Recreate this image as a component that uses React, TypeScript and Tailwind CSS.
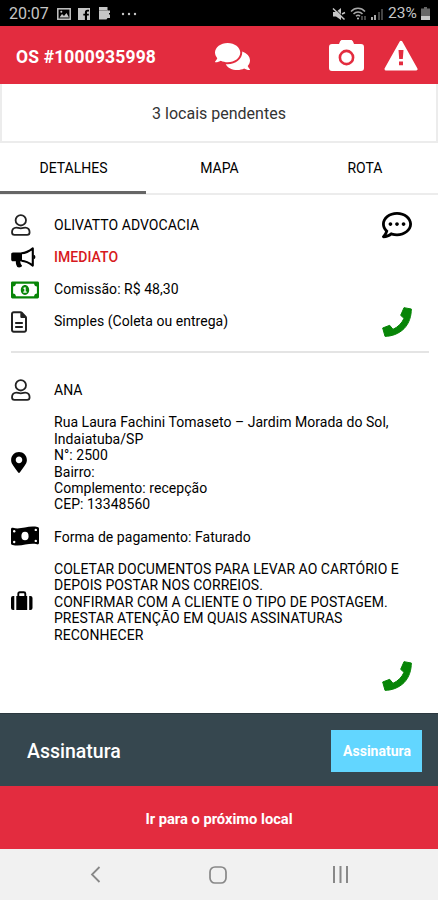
import type { ReactNode } from "react";
import { FaComments, FaMapMarkerAlt, FaRegCommentDots, FaRegMoneyBillAlt } from "react-icons/fa";
import { FaRegFileLines } from "react-icons/fa6";

function PersonIcon() {
  return (
    <svg width="20" height="22" viewBox="0 0 20 22" fill="none" stroke="#222" strokeWidth="1.8">
      <circle cx="9.8" cy="6.300" r="5.200" />
      <path d="M5.300 13.600C2.600 13.600 1 15.600 1 18.300c0 1.700.8 2.600 2.400 2.600h12.800c1.600 0 2.400-.9 2.400-2.600 0-2.700-1.600-4.700-4.300-4.700-1.500 0-2.500.7-4.500.7s-3-.7-4.500-.7Z" />
    </svg>
  );
}

function PhoneIcon({ className }: { className: string }) {
  return (
    <svg className={className} width="30" height="30" viewBox="0 0 90 90" fill="#078507" stroke="#078507" strokeWidth="3" strokeLinejoin="round">
      <path d="M66 2 88 6c0 20-6 43-22 59C50 81 28 88 9 88L2 63l21-8 10 12c15-7 27-19 33-33L56 25Z" />
    </svg>
  );
}

function CameraIcon() {
  return (
    <svg className="ml-[79px]" width="35" height="31" viewBox="0 0 35 31">
      <path fill="#fff" d="M3 4h7l1-2.400C11.400.6 12.200 0 13.200 0h8.600c1 0 1.800.6 2.200 1.600L25 4h7a3 3 0 0 1 3 3v21a3 3 0 0 1-3 3H3a3 3 0 0 1-3-3V7a3 3 0 0 1 3-3Z" />
      <circle cx="17.500" cy="17.500" r="6.600" fill="none" stroke="#e32c3f" strokeWidth="2.600" />
    </svg>
  );
}

function WarningIcon() {
  return (
    <svg className="ml-[20px]" width="34" height="31" viewBox="0 0 34 31">
      <path d="M17 2.200 32 29H2Z" fill="#fff" stroke="#fff" strokeWidth="3" strokeLinejoin="round" />
      <path d="M14.500 10h5l-.7 9h-3.600ZM15 21.500h4v3.800h-4Z" fill="#e32c3f" />
    </svg>
  );
}

function BullhornIcon() {
  return (
    <svg width="25" height="22" viewBox="0 0 25 22">
      <path d="M2 5.500h9v8.700H9.300c0 2 .7 3.300 1.800 4.600-.4 1.700-3.500 2-4.800 1.200-1-2-1.700-3.600-1.400-5.800H2c-1.200 0-1.800-.7-1.800-1.800v-5C.2 6.200.8 5.500 2 5.500Z" fill="#000" />
      <path d="M10.500 6.300C15 6 18.500 4 21.800 1.400v17.200c-3.300-2.600-6.800-4.600-11.300-4.900" fill="none" stroke="#000" strokeWidth="2.100" strokeLinejoin="round" />
      <path d="M22.500 7.700c2.500.3 2.500 4.200 0 4.500Z" fill="#000" />
    </svg>
  );
}

function CashIcon() {
  return (
    <svg className="mt-[-2px]" width="28" height="20" viewBox="0 0 28 20">
      <path d="M0 3.300c0-1.200.8-1.700 1.900-1.500C10 4 17-.9 26.400 1c1 .2 1.600.8 1.600 1.800v14c0 1.200-.8 1.800-1.900 1.500C18 16.300 11 21 1.600 19 .6 18.800 0 18.200 0 17.200Z" fill="#000" />
      <ellipse cx="14" cy="10" rx="3.600" ry="4.300" fill="#fff" />
      <g fill="#fff">
        <circle cx="3.200" cy="5.200" r="1.200" />
        <circle cx="24.800" cy="3.900" r="1.200" />
        <circle cx="3.200" cy="16" r="1.200" />
        <circle cx="24.800" cy="14.900" r="1.200" />
      </g>
    </svg>
  );
}

function SuitcaseIcon() {
  return (
    <svg className="mt-[-2px]" width="22" height="20" viewBox="0 0 22 20">
      <path d="M3.300 5v14H2a2 2 0 0 1-2-2V7a2 2 0 0 1 2-2ZM18.200 5v14h1.300a2 2 0 0 0 2-2V7a2 2 0 0 0-2-2ZM5.300 5h10.900v14H5.300Z" fill="#000" />
      <path d="M7.300 6V2.800c0-1 .5-1.500 1.500-1.500h4c1 0 1.500.5 1.500 1.500V6" fill="none" stroke="#000" strokeWidth="1.900" />
    </svg>
  );
}

function StatusBar() {
  return (
    <div className="flex h-[26px] shrink-0 items-center bg-black pl-[9px] pr-2 pt-px text-[#c6c6c6]">
      <span className="w-[41px] whitespace-nowrap text-[16px] leading-none">20:07</span>
      <svg className="ml-[7px]" width="14" height="12" viewBox="0 0 14 12">
        <rect x=".8" y=".8" width="12.400" height="10.400" fill="none" stroke="#c6c6c6" strokeWidth="1.500" />
        <path d="M2.500 9.500 5 6l2 2 2.500-3 2.500 4.500Z" fill="#c6c6c6" />
        <circle cx="4.300" cy="3.700" r="1" fill="#c6c6c6" />
      </svg>
      <svg className="ml-[7px]" width="12" height="12" viewBox="0 0 12 12">
        <path fill="#c6c6c6" d="M0 0h12v12H9V7.600h1.800V5.700H9V4.500c0-.7.4-1 1-1h1V1.700H9.400C7.700 1.700 6.900 2.800 6.900 4.300v1.400H5.300v1.900h1.600V12H0Z" />
      </svg>
      <svg className="ml-[9px]" width="11" height="13" viewBox="0 0 11 13">
        <path fill="#c6c6c6" d="M0 0h8.500v3.500H11v2.500h-1v1.500h1V11H8.500l-1 1.500H0Z" />
        <path stroke="#777" strokeWidth=".7" d="M0 3.500h8" />
      </svg>
      <svg className="ml-[11px]" width="16" height="4" viewBox="0 0 16 4" fill="#c6c6c6">
        <circle cx="2" cy="2" r="1.200" />
        <circle cx="8" cy="2" r="1.200" />
        <circle cx="14" cy="2" r="1.200" />
      </svg>
      <svg className="ml-auto" width="14" height="14" viewBox="0 0 14 14" fill="#c6c6c6">
        <path d="M1 5h3l5-4v12L4 9.500H1Z" />
        <path d="M1.500.2 13.800 12.500" stroke="#000" strokeWidth="1" />
        <path d="m1 1.500 11.500 11M10 7l3-1.500" stroke="#c6c6c6" strokeWidth="1.500" />
      </svg>
      <svg className="ml-[4px]" width="17" height="14" viewBox="0 0 17 14" fill="none" stroke="#a8a8a8" strokeWidth="1.500">
        <path d="M1 4.500C5 .2 11 .2 15 4.500M3.500 7c2.500-2.700 6.500-2.700 9 0M6 9.300c1.300-1.300 2.800-1.300 4 0" />
        <circle cx="8" cy="11.500" r="1" fill="#c6c6c6" stroke="none" />
        <path d="M12 9v4m3-4v4" strokeWidth="1.200" stroke="#777" />
      </svg>
      <svg className="ml-[3px]" width="14" height="12" viewBox="0 0 14 12">
        <path d="M1 9h2v3H1Zm3-2h2v5H4Z" fill="#aaa" />
        <path d="M8 4h2v8H8Zm3-3h2v11h-2Z" fill="#444" />
      </svg>
      <span className="ml-[4px] w-[30px] whitespace-nowrap pt-px text-[15.5px] leading-none">23%</span>
      <svg className="ml-[3px]" width="9" height="13" viewBox="0 0 9 13">
        <path d="M3 0h3v1.500h3V9H0V1.500h3Z" fill="#666" />
        <path d="M0 9h9v4H0Z" fill="#c6c6c6" />
      </svg>
    </div>
  );
}

function Row({ icon, height, className = "", children }: { icon: ReactNode; height: string; className?: string; children: ReactNode }) {
  return (
    <div className={`flex items-center ${height}`}>
      <div className="flex w-[43px] shrink-0 items-center">{icon}</div>
      <div className={`whitespace-nowrap ${className}`}>{children}</div>
    </div>
  );
}

export default function App() {
  return (
    <div className="flex h-[900px] w-[438px] flex-col overflow-hidden bg-white font-['Roboto',sans-serif] text-[14px] text-black">
      <StatusBar />
      <header className="flex h-[58px] shrink-0 items-center bg-[#e32c3f] text-white">
        <h1 className="ml-[16px] w-[199px] whitespace-nowrap pt-[6px] text-[17.5px] font-bold leading-none tracking-[0.15px]">OS #1000935998</h1>
        <FaComments className="mt-[3px] h-[35px] w-[35px]" />
        <CameraIcon />
        <WarningIcon />
      </header>
      <div className="flex h-[59px] shrink-0 items-center justify-center border-2 border-t-0 border-[#ececec] pt-[3px] text-[16px] text-[#333]">
        3 locais pendentes
      </div>
      <nav className="grid h-[52px] shrink-0 grid-cols-3 border-b-2 border-[#ececec] text-center leading-[51px]">
        <div className="h-[51px] border-b-[3px] border-[#666] pl-px">DETALHES</div>
        <div className="pl-px">MAPA</div>
        <div>ROTA</div>
      </nav>
      <main className="flex h-[518px] shrink-0 flex-col pl-[11px] pr-[9px] tracking-[0.04px]">
        <section className="flex h-[158px] shrink-0 justify-between border-b-2 border-[#e4e4e4] pt-[14px]">
          <div>
            <Row height="h-[32px]" icon={<PersonIcon />}>OLIVATTO ADVOCACIA</Row>
            <Row height="h-[33px]" icon={<BullhornIcon />} className="font-medium text-[#d71920]">IMEDIATO</Row>
            <Row height="h-[31px]" icon={<FaRegMoneyBillAlt className="h-[28px] w-[28px] text-[#078507]" />}>Comissão: R$ 48,30</Row>
            <Row height="h-[33px]" icon={<FaRegFileLines className="h-[22px] w-[16px] text-[#222]" />}>Simples (Coleta ou entrega)</Row>
          </div>
          <div className="mr-[17px] flex flex-col items-center">
            <FaRegCommentDots className="mt-px h-[30px] w-[30px]" />
            <PhoneIcon className="mt-[67px]" />
          </div>
        </section>
        <section className="flex flex-col pt-[21px]">
          <Row height="h-[32px]" icon={<PersonIcon />}>ANA</Row>
          <Row height="h-[115px]" icon={<FaMapMarkerAlt className="mt-[-2px] h-[21px] w-[16px]" />} className="leading-[16.4px]">
            Rua Laura Fachini Tomaseto – Jardim Morada do Sol,<br />
            Indaiatuba/SP<br />
            N°: 2500<br />
            Bairro:<br />
            Complemento: recepção<br />
            CEP: 13348560
          </Row>
          <Row height="h-[32px]" icon={<CashIcon />}>Forma de pagamento: Faturado</Row>
          <Row height="h-[98px]" icon={<SuitcaseIcon />} className="leading-[16.4px]">
            COLETAR DOCUMENTOS PARA LEVAR AO CARTÓRIO E<br />
            DEPOIS POSTAR NOS CORREIOS.<br />
            CONFIRMAR COM A CLIENTE O TIPO DE POSTAGEM.<br />
            PRESTAR ATENÇÃO EM QUAIS ASSINATURAS<br />
            RECONHECER
          </Row>
          <PhoneIcon className="mr-[17px] mt-[10px] self-end" />
        </section>
      </main>
      <div className="flex h-[73px] shrink-0 items-center justify-between border-t border-[#2b383f] bg-[#36474f] pl-[27px] pr-[16px] pt-[2px] text-white">
        <span className="pt-px text-[19.5px] font-medium">Assinatura</span>
        <button className="h-[42px] w-[91px] bg-[#62d6ff] pt-px pl-px text-[14px] font-bold">Assinatura</button>
      </div>
      <button className="h-[63px] shrink-0 bg-[#e32c3f] pt-[3px] text-[14.7px] font-bold text-white">Ir para o próximo local</button>
      <footer className="flex h-[51px] shrink-0 items-center bg-[#f1f1f1] pl-[90px]">
        <svg width="11" height="17" viewBox="0 0 11 17" fill="none" stroke="#888" strokeWidth="1.800"><path d="M9.500 1 2 8.500 9.500 16" /></svg>
        <svg className="ml-[108px]" width="18" height="18" viewBox="0 0 18 18" fill="none" stroke="#888" strokeWidth="1.700"><rect x="1" y="1" width="16" height="16" rx="5" /></svg>
        <svg className="ml-[105px]" width="17" height="17" viewBox="0 0 17 17" stroke="#888" strokeWidth="2"><path d="M2 0v17M8.500 0v17M15 0v17" /></svg>
      </footer>
    </div>
  );
}
